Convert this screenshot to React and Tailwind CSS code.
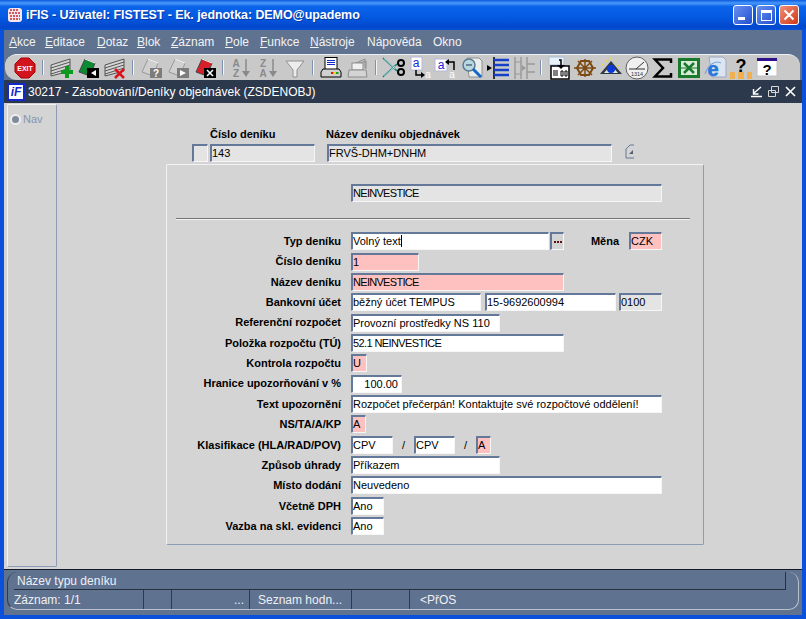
import React from "react";

const menuItems = [
  ["A", "kce", "w-[36px]", true],
  ["E", "ditace", "w-[52px]", true],
  ["D", "otaz", "w-[40px]", true],
  ["B", "lok", "w-[34px]", true],
  ["Z", "áznam", "w-[54px]", true],
  ["P", "ole", "w-[35px]", true],
  ["F", "unkce", "w-[50px]", true],
  ["N", "ástroje", "w-[57px]", true],
  ["Náp", "ověda", "w-[66px]", false],
  ["O", "kno", "w-[40px]", false],
];

const Svg = ({ children }) => (
  <svg viewBox="0 0 24 24" className="w-6 h-6 block">
    {children}
  </svg>
);

const Sheet = ({ fill = "#d6d6d6", line = "#555" }) => (
  <g>
    <path d="M2 9 21 3v12L2 20Z" fill={fill} stroke={line} />
    <path d="M2 12 21 6M2 15 21 9M2 18 21 12" stroke={line} />
  </g>
);

const Tilted = ({ fill, line = "#444" }) => (
  <g>
    <path d="M3 16 9 3l10 4-5 13Z" fill={fill} stroke={line} />
    <path d="M9 3l10 4" stroke="#fff" />
  </g>
);

const Box = ({ fill = "#000", children }) => (
  <g>
    <rect x="11" y="12" width="12" height="10" fill={fill} />
    {children}
  </g>
);

const ExitIcon = () => (
  <Svg>
    <path d="M8 2h8l6 6v8l-6 6H8l-6-6V8Z" fill="#d2141e" stroke="#a00" />
    <text x="12" y="15" textAnchor="middle" fill="#fff" fontSize="7" fontWeight="700" fontFamily="Liberation Sans, sans-serif">EXIT</text>
  </Svg>
);
const AddIcon = () => (
  <Svg>
    <Sheet />
    <path d="M18 10v12M12 16h12" stroke="#0a9a1e" strokeWidth="4" />
  </Svg>
);
const GreenIcon = () => (
  <Svg>
    <Tilted fill="#0c8a34" />
    <Box>
      <path d="M20 14v6l-5-3Z" fill="#fff" />
    </Box>
  </Svg>
);
const DeleteIcon = () => (
  <Svg>
    <Sheet />
    <path d="M12 13l9 9M21 13l-9 9" stroke="#d8141e" strokeWidth="2.5" />
  </Svg>
);
const GreyQuery = () => (
  <Svg>
    <Tilted fill="#d0d0d0" line="#999" />
    <Box fill="#7c7c7c">
      <text x="17" y="21" textAnchor="middle" fill="#fff" fontSize="10" fontWeight="700" fontFamily="Liberation Sans, sans-serif">?</text>
    </Box>
  </Svg>
);
const GreyRun = () => (
  <Svg>
    <Tilted fill="#d0d0d0" line="#999" />
    <Box fill="#7c7c7c">
      <path d="M14 14v6l6-3Z" fill="#fff" />
    </Box>
  </Svg>
);
const RedCancel = () => (
  <Svg>
    <Tilted fill="#d8202a" />
    <Box>
      <path d="M14 14l6 6M20 14l-6 6" stroke="#fff" strokeWidth="1.5" />
    </Box>
  </Svg>
);
const SortIcon = ({ top, bottom }) => (
  <Svg>
    <text x="7" y="11" textAnchor="middle" fill="#8a8a8a" fontSize="10" fontWeight="700" fontFamily="Liberation Sans, sans-serif">{top}</text>
    <text x="7" y="21" textAnchor="middle" fill="#8a8a8a" fontSize="10" fontWeight="700" fontFamily="Liberation Sans, sans-serif">{bottom}</text>
    <path d="M17 3v15" stroke="#8a8a8a" strokeWidth="1.5" />
    <path d="M13 15h8l-4 6Z" fill="#8a8a8a" />
  </Svg>
);
const FunnelIcon = () => (
  <Svg>
    <path d="M3 5h18l-7 9v7h-4v-7Z" fill="#ececec" stroke="#909090" />
  </Svg>
);
const PrinterIcon = () => (
  <Svg>
    <rect x="6" y="1.5" width="12" height="12" fill="#fff" stroke="#000" />
    <path d="M8 4.5h8M8 6.5h8M8 8.5h8" stroke="#1428c8" />
    <path d="M4 13h16l2 3v5H2v-5Z" fill="#d0d0d0" stroke="#000" />
    <path d="M12 17h2.5" stroke="#e01818" strokeWidth="2" />
    <path d="M14.5 17H17" stroke="#e8d818" strokeWidth="2" />
    <path d="M17 17h2.5" stroke="#18a018" strokeWidth="2" />
  </Svg>
);
const GreyPrinter = () => (
  <Svg>
    <path d="M8 8 19 3v9M11 8l9-3v8" fill="none" stroke="#8c8c8c" />
    <rect x="6" y="7" width="11" height="7" fill="#f0f0f0" stroke="#8c8c8c" />
    <path d="M3 14h17l1 7H2Z" fill="#d4d4d4" stroke="#8c8c8c" />
  </Svg>
);
const ScissorsIcon = () => (
  <Svg>
    <path d="M1 2 15 15M1 21 15 8" stroke="#16807c" strokeWidth="1.6" />
    <path d="M2 2.5 13 13M2 20.5 13 10" stroke="#e4f4f4" strokeWidth="0.7" />
    <circle cx="19" cy="7" r="3" fill="none" stroke="#000" strokeWidth="2" />
    <circle cx="19" cy="16" r="3" fill="none" stroke="#000" strokeWidth="2" />
  </Svg>
);
const CopyIcon = () => (
  <Svg>
    <rect x="3" y="1" width="11" height="13" fill="#fff" stroke="#b8b8d8" />
    <text x="8" y="11" textAnchor="middle" fill="#1428d8" fontSize="12" fontFamily="Liberation Sans, sans-serif">a</text>
    <path d="M8 14v5h6" fill="none" stroke="#000" strokeWidth="1.5" />
    <path d="M13 16v6l4-3Z" fill="#000" />
    <text x="20" y="22" textAnchor="middle" fill="#fff" fontSize="10" fontFamily="Liberation Sans, sans-serif">a</text>
  </Svg>
);
const PasteIcon = () => (
  <Svg>
    <rect x="1" y="3" width="12" height="12" fill="#fff" stroke="#b8b8d8" />
    <text x="7" y="13" textAnchor="middle" fill="#1428d8" fontSize="12" fontFamily="Liberation Sans, sans-serif">a</text>
    <path d="M20 14V6h-7" fill="none" stroke="#000" strokeWidth="1.5" />
    <path d="M15 3v6l-4-3Z" fill="#000" />
    <text x="18" y="22" textAnchor="middle" fill="#fff" fontSize="10" fontFamily="Liberation Sans, sans-serif">a</text>
  </Svg>
);
const SearchIcon = () => (
  <Svg>
    <path d="M7 2h12l3 3v16H9Z" fill="#ececec" stroke="#909090" />
    <circle cx="9" cy="9" r="6" fill="#b8d8e0" stroke="#5a7a90" strokeWidth="1.5" />
    <path d="M6 9h6" stroke="#203050" />
    <path d="M13 13l8 8" stroke="#1468c8" strokeWidth="3" />
  </Svg>
);
const ListIcon = ({ color, mark }) => (
  <Svg>
    <path d="M8 1v22" stroke={mark} strokeWidth="1.5" />
    <path d="M8 4h15M8 9h15M8 14h15M8 19h15" stroke={color} strokeWidth="2.5" />
    <path d="M1 9v6l5-3Z" fill={mark} />
  </Svg>
);
const GreyColumns = () => (
  <Svg>
    <path d="M3 1v22M9 1v22M15 1v22M15 8h8M15 16h8" stroke="#9a9a9a" strokeWidth="1.5" fill="none" />
    <path d="M3 6h6M3 18h6" stroke="#9a9a9a" />
    <path d="M10 9v6l4-3Z" fill="#9a9a9a" />
  </Svg>
);
const CardIcon = () => (
  <Svg>
    <rect x="2" y="1" width="15" height="8" fill="#e8f0f8" stroke="#a8c0d8" />
    <rect x="4" y="10" width="18" height="13" fill="#fff" stroke="#000" strokeWidth="1.5" />
    <path d="M12 4h2v6" fill="none" stroke="#000" strokeWidth="1.5" />
    <path d="M10 9h8l-4 4Z" fill="#000" />
    <path d="M6 15h5M6 17h5M6 19h5M14 15h2v5h-2ZM18 15h2v5h-2Z" stroke="#000" fill="none" />
  </Svg>
);
const WheelIcon = () => (
  <Svg>
    <path d="M1 12h22M12 3v18M5 5l14 14M19 5 5 19" stroke="#7c4a10" strokeWidth="1.5" />
    <path d="M8 5h8l4 7-4 7H8l-4-7Z" fill="none" stroke="#7c4a10" strokeWidth="2" />
  </Svg>
);
const EyeIcon = () => (
  <Svg>
    <path d="M12 5 23 18H1Z" fill="#2c3a40" />
    <path d="M5 17 12 9l7 8Z" fill="#e8e8e8" />
    <circle cx="12" cy="13" r="4" fill="#0c38d8" />
    <path d="M3 8l2 2M12 1v3M21 8l-2 2M7 4l1 2M17 4l-1 2" stroke="#f0e020" />
  </Svg>
);
const ClockIcon = () => (
  <Svg>
    <circle cx="12" cy="12" r="11" fill="#f0f0f0" stroke="#606060" />
    <path d="M11 13 19 6" stroke="#303030" />
    <path d="M4 13h16" stroke="#303030" />
    <text x="12" y="20" textAnchor="middle" fill="#303030" fontSize="5.5" fontFamily="Liberation Sans, sans-serif">1314</text>
  </Svg>
);
const SigmaIcon = () => (
  <Svg>
    <path d="M20 7V3.5H4l8 8.5-8 8.5h16V17" fill="none" stroke="#000" strokeWidth="2.5" />
  </Svg>
);
const ExcelIcon = () => (
  <Svg>
    <rect x="1" y="2" width="22" height="20" fill="#1a7a2c" />
    <rect x="4" y="5" width="16" height="14" fill="#d8ecd8" />
    <path d="M7 7l10 10M17 7 7 17" stroke="#1a7a2c" strokeWidth="2.5" />
    <path d="M4 12h16" stroke="#1a7a2c" />
  </Svg>
);
const BrowserIcon = () => (
  <Svg>
    <path d="M6 1h14l3 3v17H9Z" fill="#dce4f0" stroke="#a0a8c0" />
    <text x="10" y="20" textAnchor="middle" fill="#2878d8" stroke="#2878d8" strokeWidth="0.6" fontSize="20" fontWeight="700" fontFamily="Liberation Sans, sans-serif">e</text>
    <path d="M2 18C6 6 14 5 18 7" fill="none" stroke="#60a0e8" />
  </Svg>
);
const HelpTopicsIcon = () => (
  <Svg>
    <text x="12" y="16" textAnchor="middle" fill="#000" fontSize="18" fontWeight="700" fontFamily="Liberation Sans, sans-serif">?</text>
    <rect x="1" y="16" width="5" height="7" fill="#f0b050" />
    <rect x="9" y="16" width="6" height="7" fill="#f0b050" />
    <rect x="18" y="16" width="5" height="7" fill="#f0b050" />
  </Svg>
);
const HelpWindowIcon = () => (
  <Svg>
    <rect x="2" y="2" width="20" height="18" fill="#fff" stroke="#c0c0c0" />
    <rect x="2" y="2" width="20" height="3" fill="#30108c" />
    <text x="12" y="19" textAnchor="middle" fill="#000" fontSize="15" fontWeight="700" fontFamily="Liberation Sans, sans-serif">?</text>
  </Svg>
);

const Sep = () => (
  <div className="w-[9px] flex justify-center">
    <div className="w-[2px] h-[15px] bg-[#f2f4f8] border-l border-[#7f92b4]" />
  </div>
);

const Tool = ({ children, narrow }) => (
  <div className={narrow ? "w-[26px] flex justify-center" : "w-[27px] flex justify-center"}>{children}</div>
);

const Field = ({ className = "", tone = "white", right, children }) => {
  const bg = tone === "pink" ? "bg-[#ffc0c0]" : tone === "grey" ? "bg-[#e4e4e4]" : "bg-white";
  return (
    <div
      className={`${className} ${bg} ${right ? "text-right pr-[3px]" : ""} h-[18px] shrink-0 rounded-[1px] border-t-2 border-l-2 border-b border-r border-t-[#64789a] border-l-[#64789a] border-b-[#f6f6f6] border-r-[#f6f6f6] text-[11px] leading-[14px] text-black whitespace-nowrap overflow-hidden`}
    >
      {children}
    </div>
  );
};

const Row = ({ label, children }) => (
  <div className="flex items-center h-[20.36px]">
    <div className="w-[174px] text-right text-[11px] font-bold text-black whitespace-nowrap">{label}</div>
    <div className="ml-[10px] flex items-center">{children}</div>
  </div>
);

export default function App() {
  return (
    <div className="w-[806px] h-[619px] flex flex-col overflow-hidden bg-[#0a50da] font-['Liberation_Sans',sans-serif]">
      {/* title bar */}
      <div className="h-[30px] shrink-0 flex items-center pl-[7px] pr-[7px] bg-[linear-gradient(180deg,#0a5ae0_0%,#4a98f8_10%,#0a64ea_22%,#0358e0_60%,#0348cc_90%,#0350d8_100%)]">
        <svg viewBox="0 0 16 16" className="w-4 h-4 mr-[3px]">
          <rect x="1" y="1" width="14" height="14" rx="3" fill="#f4e8ec" />
          <path d="M3 3h9M2 6h11M3 9h10M3 12h10" stroke="#c82838" strokeWidth="1.5" strokeDasharray="2 1" />
        </svg>
        <div className="text-white font-bold text-[12.5px] tracking-[-0.08px] whitespace-nowrap [text-shadow:1px_1px_0_#0838a0]">
          iFIS - Uživatel: FISTEST - Ek. jednotka: DEMO@upademo
        </div>
        <div className="ml-auto flex gap-[3px]">
          <div className="w-[20px] h-[20px] rounded-[3px] border border-white bg-[linear-gradient(135deg,#6a90f0,#2050d0)] flex items-end pl-[4px] pb-[4px]">
            <div className="w-[7px] h-[3px] bg-white" />
          </div>
          <div className="w-[20px] h-[20px] rounded-[3px] border border-white bg-[linear-gradient(135deg,#6a90f0,#2050d0)] flex items-center justify-center">
            <div className="w-[11px] h-[11px] border border-white border-t-[3px]" />
          </div>
          <div className="w-[20px] h-[20px] rounded-[3px] border border-white bg-[linear-gradient(135deg,#f09078,#d03818)] flex items-center justify-center">
            <svg viewBox="0 0 12 12" className="w-3 h-3">
              <path d="M1.5 1.5l9 9M10.5 1.5l-9 9" stroke="#fff" strokeWidth="2" />
            </svg>
          </div>
        </div>
      </div>

      <div className="flex-1 flex flex-col mx-[4px] mb-[4px] bg-[#5f7290] min-h-0">
        {/* menu */}
        <div className="h-[24px] shrink-0 flex items-center pl-[5px] text-[12px] text-[#f2f2f2]">
          {menuItems.map(([first, rest, w, mnemonic]) => (
            <div key={first} className={`${w} whitespace-nowrap`}>
              <span className={mnemonic ? "underline" : ""}>{first}</span>
              {rest}
            </div>
          ))}
        </div>

        {/* toolbar */}
        <div className="h-[26px] shrink-0 flex items-center pl-[6.5px] ml-[1px] mr-[2px] bg-[#c9c9c9] rounded-l-[12px] rounded-tr-[12px] border-t border-[#eceff4]">
          <Tool><ExitIcon /></Tool>
          <Sep />
          <Tool><AddIcon /></Tool>
          <Tool><GreenIcon /></Tool>
          <Tool><DeleteIcon /></Tool>
          <Sep />
          <Tool><GreyQuery /></Tool>
          <Tool><GreyRun /></Tool>
          <Tool><RedCancel /></Tool>
          <Sep />
          <Tool><SortIcon top="A" bottom="Z" /></Tool>
          <Tool><SortIcon top="Z" bottom="A" /></Tool>
          <Tool><FunnelIcon /></Tool>
          <Sep />
          <Tool><PrinterIcon /></Tool>
          <Tool><GreyPrinter /></Tool>
          <Sep />
          <Tool narrow><ScissorsIcon /></Tool>
          <Tool narrow><CopyIcon /></Tool>
          <Tool narrow><PasteIcon /></Tool>
          <Tool narrow><SearchIcon /></Tool>
          <Tool narrow><ListIcon color="#1440c8" mark="#000" /></Tool>
          <Tool narrow><GreyColumns /></Tool>
          <Sep />
          <Tool narrow><CardIcon /></Tool>
          <Tool narrow><WheelIcon /></Tool>
          <Tool narrow><EyeIcon /></Tool>
          <Tool narrow><ClockIcon /></Tool>
          <Tool narrow><SigmaIcon /></Tool>
          <Tool narrow><ExcelIcon /></Tool>
          <Tool narrow><BrowserIcon /></Tool>
          <Tool narrow><HelpTopicsIcon /></Tool>
          <Tool narrow><HelpWindowIcon /></Tool>
        </div>

        {/* inner window title */}
        <div className="h-[23px] shrink-0 flex items-center pl-[3px] pr-[5px] bg-[#2c384c]">
          <div className="w-[18px] h-[18px] bg-white border-2 border-[#1428c8] flex items-center justify-center mr-[3px]">
            <span className="text-[12px] leading-none font-bold italic text-[#1428c8]">iF</span>
          </div>
          <div className="text-[12px] text-white whitespace-nowrap">30217 - Zásobování/Deníky objednávek (ZSDENOBJ)</div>
          <div className="ml-auto flex items-center gap-[4px]">
            <svg viewBox="0 0 13 13" className="w-[13px] h-[13px]">
              <path d="M1 11.5h11M11 2 4 8M3.5 4v5h5" fill="none" stroke="#fff" strokeWidth="1.4" />
            </svg>
            <svg viewBox="0 0 13 13" className="w-[13px] h-[13px]">
              <path d="M4.5 1.5h7v6h-7ZM1.5 5.5h7v6h-7Z" fill="#2c384c" stroke="#d8d8d8" />
            </svg>
            <svg viewBox="0 0 13 13" className="w-[13px] h-[13px]">
              <path d="M2 2l9 9M11 2l-9 9" stroke="#fff" strokeWidth="1.6" />
            </svg>
          </div>
        </div>

        {/* content */}
        <div className="h-[467px] shrink-0 flex bg-[#d4d4d4] pt-[1px] pb-[2px] pl-[3px] border-b border-[#141a26]">
          <div className="w-[50px] shrink-0 border-t border-l border-t-[#f2f2f2] border-l-[#f2f2f2] border-r border-b border-r-[#8c9cb4] border-b-[#8c9cb4] rounded-[2px] flex items-start pt-[8px] pl-[2px]">
            <div className="w-[11px] h-[11px] rounded-full bg-[#7f8a9c] border-2 border-[#eeeeee] mr-[2px] mt-[1px]" />
            <span className="text-[11px] leading-[13px] text-[#8494ac]">Nav</span>
          </div>

          <div className="flex-1 pl-[109px]">
            {/* header record */}
            <div className="flex pt-[22px] pl-[44px] h-[40px] text-[11px] font-bold text-black">
              <div className="w-[116px]">Číslo deníku</div>
              <div>Název deníku objednávek</div>
            </div>
            <div className="flex items-start pl-[26px] h-[20px]">
              <Field className="w-[16px]" tone="grey" />
              <Field className="w-[105px] ml-[2px]" tone="grey">143</Field>
              <Field className="w-[285px] ml-[12px]" tone="grey">FRVŠ-DHM+DNHM</Field>
              <svg viewBox="0 0 10 15" className="w-[10px] h-[15px] ml-[13px]">
                <path d="M1 14V5l4-4h4M1 14h8" fill="none" stroke="#64789a" />
                <path d="M8 6v4H4Z" fill="#56606e" />
              </svg>
            </div>

            {/* detail panel */}
            <div className="w-[538px] h-[381px] border-t border-l border-t-[#f2f2f2] border-l-[#f2f2f2] border-r border-b border-r-[#8c9cb4] border-b-[#8c9cb4] rounded-[2px]">
              <div className="pl-[184px] pt-[19px]">
                <Field className="w-[311px] tracking-[-0.7px]" tone="grey">NEINVESTICE</Field>
              </div>
              <div className="ml-[9px] mr-[13px] mt-[16px] border-t border-b border-t-[#757575] border-b-[#f2f2f2] h-[2px]" />
              <div className="pt-[11px]">
                <Row label="Typ deníku">
                  <Field className="w-[198px]">
                    <span className="border-r border-black">Volný text</span>
                  </Field>
                  <div className="w-[14px] h-[18px] ml-[1px] bg-[#d4d4d4] border-t-2 border-l-2 border-b border-r border-t-[#64789a] border-l-[#64789a] border-b-[#f6f6f6] border-r-[#f6f6f6] flex items-center justify-center gap-[1px]">
                    <span className="w-[2px] h-[2px] bg-[#5c1010]" />
                    <span className="w-[2px] h-[2px] bg-[#5c1010]" />
                    <span className="w-[2px] h-[2px] bg-[#5c1010]" />
                  </div>
                  <div className="w-[55px] text-right text-[11px] font-bold text-black">Měna</div>
                  <Field className="w-[33px] ml-[10px]" tone="pink">CZK</Field>
                </Row>
                <Row label="Číslo deníku">
                  <Field className="w-[68px]" tone="pink">1</Field>
                </Row>
                <Row label="Název deníku">
                  <Field className="w-[213px] tracking-[-0.7px]" tone="pink">NEINVESTICE</Field>
                </Row>
                <Row label="Bankovní účet">
                  <Field className="w-[130px]">běžný účet TEMPUS</Field>
                  <Field className="w-[131px] ml-[4px]">15-9692600994</Field>
                  <Field className="w-[43px] ml-[3px]" tone="grey">0100</Field>
                </Row>
                <Row label="Referenční rozpočet">
                  <Field className="w-[149px]">Provozní prostředky NS 110</Field>
                </Row>
                <Row label="Položka rozpočtu (TÚ)">
                  <Field className="w-[213px] tracking-[-0.6px]">52.1 NEINVESTICE</Field>
                </Row>
                <Row label="Kontrola rozpočtu">
                  <Field className="w-[16px]" tone="pink">U</Field>
                </Row>
                <Row label="Hranice upozorňování v %">
                  <Field className="w-[51px]" right>100.00</Field>
                </Row>
                <Row label="Text upozornění">
                  <Field className="w-[311px]">Rozpočet přečerpán! Kontaktujte své rozpočtové oddělení!</Field>
                </Row>
                <Row label="NS/TA/A/KP">
                  <Field className="w-[15px]" tone="pink">A</Field>
                </Row>
                <Row label="Klasifikace (HLA/RAD/POV)">
                  <Field className="w-[42px]">CPV</Field>
                  <span className="w-[21px] text-center text-[11px] text-black">/</span>
                  <Field className="w-[41px]">CPV</Field>
                  <span className="w-[21px] text-center text-[11px] text-black">/</span>
                  <Field className="w-[15px]" tone="pink">A</Field>
                </Row>
                <Row label="Způsob úhrady">
                  <Field className="w-[149px]">Příkazem</Field>
                </Row>
                <Row label="Místo dodání">
                  <Field className="w-[311px]">Neuvedeno</Field>
                </Row>
                <Row label="Včetně DPH">
                  <Field className="w-[33px]">Ano</Field>
                </Row>
                <Row label="Vazba na skl. evidenci">
                  <Field className="w-[33px]">Ano</Field>
                </Row>
              </div>
            </div>
          </div>
        </div>

        {/* status bar */}
        <div className="flex-1 px-[3px] pt-[2px] text-[12px] text-[#eef0f4]">
          <div className="h-[38px] rounded-[10px] border-l border-r border-b border-l-[#2e3a4e] border-r-[#b8c0ce] border-b-[#b8c0ce] flex flex-col">
            <div className="h-[18px] shrink-0 flex items-center ml-[6px] mr-[12px] pl-[3px] border-b border-[#26303e]">
              <span>Název typu deníku</span>
              <div className="ml-auto w-[1px] h-full bg-[#26303e]" />
            </div>
            <div className="flex-1 flex items-center pl-[6px]">
              <div className="w-[130px] h-full flex items-center border-r border-[#2e3a4e] whitespace-nowrap">Záznam: 1/1</div>
              <div className="w-[28px] h-full border-r border-[#2e3a4e]" />
              <div className="w-[78px] h-full flex items-center justify-end pr-[5px] border-r border-[#2e3a4e]">...</div>
              <div className="w-[102px] h-full flex items-center pl-[8px] border-r border-[#2e3a4e] whitespace-nowrap">Seznam hodn...</div>
              <div className="w-[58px] h-full border-r border-[#2e3a4e]" />
              <div className="pl-[10px]">&lt;PřOS</div>
            </div>
          </div>
        </div>
      </div>
    </div>
  );
}
